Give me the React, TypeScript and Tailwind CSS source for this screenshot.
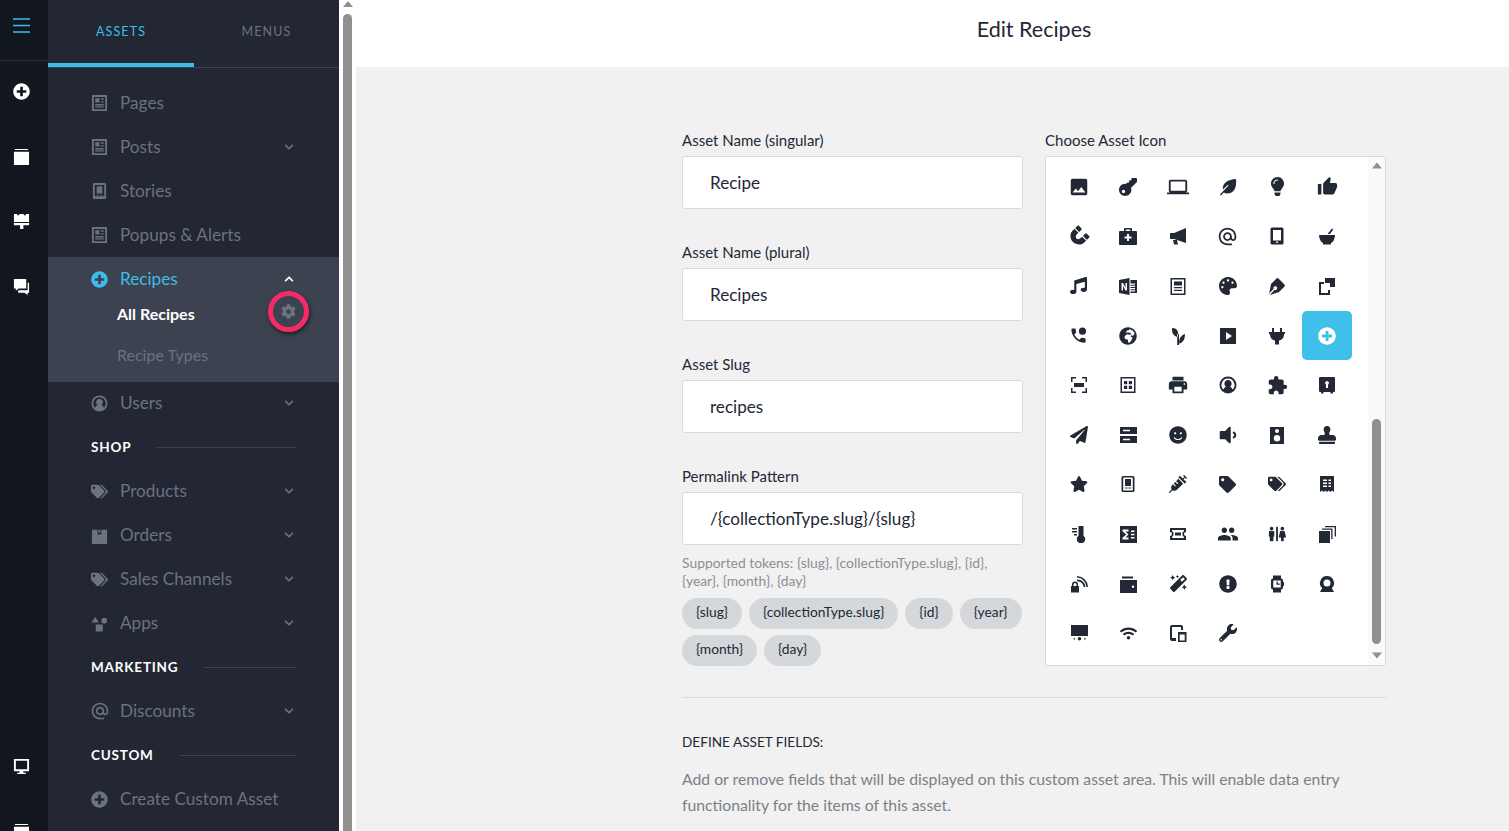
import type { ReactNode } from "react";
import {
  FaChevronDown,
  FaChevronUp,
  FaCog,
  FaExclamationCircle,
  FaGlobeAfrica,
  FaKey,
  FaLightbulb,
  FaMagic,
  FaMagnet,
  FaMusic,
  FaPalette,
  FaPaperPlane,
  FaPlusCircle,
  FaRestroom,
  FaSmile,
  FaStamp,
  FaStar,
  FaSyringe,
  FaTag,
  FaTags,
  FaVolumeDown,
  FaWifi,
  FaWrench,
} from "react-icons/fa";
import { MdAlternateEmail, MdExtension, MdImage, MdLaptop, MdPeople, MdPrint, MdThumbUp } from "react-icons/md";

type IconProps = { className?: string };

// Small helper for the hand drawn glyphs, all on an 18 unit box
const glyph = (d: string, extra?: ReactNode) =>
  function Glyph({ className = "h-[18px] w-[18px]" }: IconProps) {
    return (
      <svg viewBox="0 0 18 18" className={className} fill="currentColor">
        <path fillRule="evenodd" d={d} />
        {extra}
      </svg>
    );
  };

const Doc = glyph("M1 0h16v17H1V0zm2 2v13h12V2H3zm1.500 1.500h4.500V8H4.500V3.500zm6 0h3V5h-3V3.500zm0 3h3V8h-3V6.500zm-6 3h9V11h-9V9.500zm0 2.500h9v1.300h-9V12z");
const Phone = glyph("M3.500 0h11A1.500 1.500 0 0 1 16 1.500v14a1.500 1.500 0 0 1-1.500 1.500h-11A1.500 1.500 0 0 1 2 15.500v-14A1.500 1.500 0 0 1 3.500 0zM4 2v12h10V2H4zm2 1.500h6V11H6V3.500zM6 12.500h2.200v1H6zm3.800 0H12v1H9.800z");
const UserRing = glyph("M9 .5a8.500 8.500 0 1 1 0 17 8.500 8.500 0 0 1 0-17zm0 2a6.500 6.500 0 0 0-4.700 11c.8-1.700 2-2.500 2.700-2.800A3.600 3.600 0 1 1 11 10.700c.7.300 1.900 1.100 2.700 2.800A6.500 6.500 0 0 0 9 2.500z");
const OrderBox = glyph("M1 3h6v5h4V3h6v15H1V3zm7 0h2v3H8V3z");
const Shapes = glyph("M4.500 2l4 6h-8l4-6zM14 3a3 3 0 1 1 0 6 3 3 0 0 1 0-6zM5 10h7.500v7.500H5V10z");
const Expand = glyph("M1 1h5v1.500H2.500V6H1V1zm11 0h5v5h-1.500V2.500H12V1zM1 12h1.500v3.500H6V17H1v-5zm14.500 0H17v5h-5v-1.500h3.500V12zM4 7h10v4H4V7z");
const Panes = glyph("M1.500 1h15v16h-15V1zM3 2.500v13h12v-13H3zM5 5h3.200v3.200H5V5zm4.800 0H13v3.200H9.800V5zM5 9.800h3.200V13H5V9.800zm4.800 0H13V13H9.800V9.800z");
const Safe = glyph("M2 1h14a1 1 0 0 1 1 1v13a1 1 0 0 1-1 1h-1v1.500h-2.500V16h-7v1.500H3V16H2a1 1 0 0 1-1-1V2a1 1 0 0 1 1-1zm7 4a2 2 0 0 0-1 3.700V12h2V8.700A2 2 0 0 0 9 5z");
const ServerRows = glyph("M1 1h17v7H1V1zm3 2.800v1.400h7V3.800H4zM1 10h17v7H1v-7zm3 2.800v1.400h7v-1.400H4z");
const Speaker = glyph("M2 1h14v17H2V1zm7 2a2 2 0 1 0 0 4 2 2 0 0 0 0-4zm0 6a3.200 3.200 0 1 0 0 6.400A3.200 3.200 0 0 0 9 9z");
const Pda = glyph("M4 1h10a1.500 1.500 0 0 1 1.500 1.500v13A1.500 1.500 0 0 1 14 17H4a1.500 1.500 0 0 1-1.500-1.500v-13A1.500 1.500 0 0 1 4 1zm.200 1.500v13h9.600v-13H4.200zM6 4h6v7H6V4zm0 8.500h2.500v1H6zm3.500 0H12v1H9.500z");
const Sigma = glyph("M1 1h17v17H1V1zm2.500 3.500v1.800L7.200 9.500 3.500 12.700v1.800h6v-2H6.500l3-3-3-3h3v-2h-6zm8.500 1V7h3.500V5.500H12zm0 3.200v1.500h3.500V8.700H12zm0 3.200v1.500h3.500v-1.500H12z");
const LockWifi = glyph("M1 11h1v-1.500a3 3 0 0 1 6 0V11h1v6.500H1V11zm2.500 0h3V9.500a1.500 1.500 0 0 0-3 0V11zM7 4.500a8 8 0 0 1 8.500 7.500h-1.800A6.300 6.300 0 0 0 7 6.200V4.500zM7 1a11.500 11.500 0 0 1 11 11h-1.500A10 10 0 0 0 7 2.600V1z");
const Webcam = glyph("M9 1a7 7 0 0 1 4.800 12.100L16 17H2l2.200-3.900A7 7 0 0 1 9 1zm0 3.500a3.500 3.500 0 1 0 0 7 3.500 3.500 0 0 0 0-7z");
const Projector = glyph("M1 1h17v11H1V1zm8.500 12a1.800 1.800 0 1 1 0 3.600 1.800 1.800 0 0 1 0-3.600zM3.500 14.200h1.600v1.200H3.500zm10.500 0h1.600v1.200H14z");
const OneNote = glyph("M0 3l10.500-2v17L0 16V3zm2.500 3v7.500H4V8.800l2.500 4.700H8V6H6.500v4.700L4 6H2.500zM11.500 3H18v13h-6.500v-1.500H16v-1.200h-4.500v-1H16V11h-4.500v-1H16V8.700h-4.500v-1H16V6.400h-4.500V3z");
const FormTile = glyph("M1.500 1h15v17h-15V1zM3 2.500v14h12v-14H3zM5 4.500h8v4H5v-4zm0 5.500h8v1.300H5V10zm0 2.800h8V14H5v-1.200z");
const Brush = glyph("M1 1h3l1.500 2L7 1h4l1.500 2L14 1h3v8.500H1V1zM1 10.500h16V13h-6v4H7.500v-4H1v-2.500z");
const BoxStack = glyph("M2 1h14v1H2V1zM1 4h16v14H1V4z");
const Desktop = glyph("M1 1h16v13h-6v1.500h2.500V17h-9v-1.500H7V14H1V1zm2 2v9h12V3H3z");
const Bubbles = glyph("M1 1h13v10H6l-3 2.500V11H1V1zM15.500 5H17v10.500h-1.500V18l-3.500-2.500H5.500V13h10V5z");
const Leaf = glyph("M17 1c.8 7-1 14-8 14.500-1.800.1-3.200-.3-4.200-1L2 17.500 1 16.500l8.500-9-.7-.7L4 11.500C3 5 9 1.500 17 1z");
const Megaphone = glyph("M1 6h4l12-5v15L5 12H1V6zM4 13h4l1 4.500H5L4 13z");
const Tablet = glyph("M4 .5h10A1.500 1.500 0 0 1 15.500 2v14a1.500 1.500 0 0 1-1.500 1.500H4A1.500 1.500 0 0 1 2.500 16V2A1.500 1.500 0 0 1 4 .5zM5 3v10.500h8V3H5zm4 11.300a.9.900 0 1 0 0 1.800.9.900 0 0 0 0-1.800z");
const Mortar = glyph("M1 8h16c0 4-2 7-4 8v1.500H5V16C3 15 1 12 1 8zM9.500 7L14 1.500l1.300 1L12 7H9.500z");
const Nib = glyph("M1 17.500L3 7l6-6 1.500.5 6 6L17 9l-6 6-9.300 3 5-5.200a1.800 1.800 0 1 0-1-1L.7 17z");
const Share = glyph("M1 5h5v2H3v9h7v-3h2v5H1V5zM7 1h10v9h-5V6H7V1z");
const Slides = glyph("M1 1h16v16H1V1zm6 4v8l6-4-6-4z");
const Plug = glyph("M4 1h2v4h6V1h2v4h3v2h-1c0 4-2 6-5 6.500V17.500H7v-4C4 13 2 11 2 7H1V5h3V1z");
const Seedling = glyph("M8.200 7H10v11H8.200V7zM3 1c5 0 7 3 5.800 9C5 9.500 2.500 6 3 1zM16 7c0 6-2.500 9-6 9.500 0-5 2-8.500 6-9.500z");
const Receipt = glyph("M2 1h14v16l-2-1.500-1.700 1.500-1.600-1.500L9 17l-1.700-1.500L5.700 17 4 15.500 2 17V1zm3 3.500V6h4V4.500H5zm5.500 0V6H13V4.500h-2.500zM5 7.500V9h4V7.500H5zm5.500 0V9H13V7.500h-2.500zM5 10.500V12h4v-1.500H5zm5.500 0V12H13v-1.500h-2.500z");
const Thermo = glyph("M8.500 1h5v9.800a4.200 4.200 0 1 1-5 0V1zM2 3h5v1.500H2V3zM2 6h5v1.500H2V6zM4 9h3v1.500H4V9z");
const Ticket = glyph("M1 3h16v4a2 2 0 0 0 0 4v4H1v-4a2 2 0 0 0 0-4V3zm2 2v1a3.500 3.500 0 0 1 0 6v1h12v-1a3.500 3.500 0 0 1 0-6V5H3zm3 2.500h6v3H6v-3z");
const Stacked = glyph("M1 6h11v12H1V6zM4 3.500h10.500V14h-1.300V4.800H4V3.500zM7 1h11v10.500h-1.300V2.300H7V1z");
const Wallet = glyph("M3 1.500h11v2H3v-2zM1 5h17v13H1V5zm13 5.500a1.200 1.200 0 1 0 0 2.400 1.200 1.200 0 0 0 0-2.400z");
const Watch = glyph("M5 .5h8v3a2 2 0 0 1 2 2V7h1v4h-1v1.500a2 2 0 0 1-2 2v3H5v-3a2 2 0 0 1-2-2v-7a2 2 0 0 1 2-2v-3zM5.300 5.500v7h7.400v-7H5.300zM8.500 6.500h1.300v2h2v1.300H8.500V6.500z");
const Device = glyph("M3 1h9a2 2 0 0 1 2 2v3h-2V3H3v11h4v3H3a2 2 0 0 1-2-2V3a2 2 0 0 1 2-2zM9 8h8.500v10H9V8zm1.700 2.500v6h5v-6h-5z");
const Call = ({ className = "h-[19px] w-[19px]" }: IconProps) => (
  <svg viewBox="0 0 24 24" className={className} fill="currentColor">
    <path d="M6.620 10.790c1.440 2.830 3.760 5.140 6.590 6.590l2.200-2.200c.27-.27.67-.36 1.020-.24 1.120.37 2.330.57 3.570.57.55 0 1 .45 1 1V20c0 .55-.45 1-1 1-9.390 0-17-7.610-17-17 0-.55.45-1 1-1h3.500c.55 0 1 .45 1 1 0 1.250.2 2.450.57 3.570.11.35.03.74-.25 1.020l-2.200 2.200z" />
    <circle cx="17" cy="6.500" r="4.500" />
  </svg>
);

const gridIcons: ReactNode[] = [
  <MdImage className="h-[22px] w-[22px]" />,
  <FaKey className="h-[18px] w-[18px] rotate-180" />,
  <MdLaptop className="h-[22px] w-[22px]" />,
  <Leaf />,
  <FaLightbulb className="h-[19px] w-[19px]" />,
  <MdThumbUp className="h-[21px] w-[21px]" />,
  <FaMagnet className="h-[17px] w-[17px] rotate-45" />,
  <svg viewBox="0 0 18 18" className="h-[18px] w-[18px]" fill="currentColor">
    <path fillRule="evenodd" d="M6 1h6a1 1 0 0 1 1 1v2h4a1 1 0 0 1 1 1v12a1 1 0 0 1-1 1H1a1 1 0 0 1-1-1V5a1 1 0 0 1 1-1h4V2a1 1 0 0 1 1-1zm.800 1.500V4h4.400V2.500H6.800zM8 7v2.500H5.500v2H8V14h2v-2.500h2.500v-2H10V7H8z" />
  </svg>,
  <Megaphone />,
  <MdAlternateEmail className="h-[21px] w-[21px]" />,
  <Tablet />,
  <Mortar />,
  <FaMusic className="h-[17px] w-[17px]" />,
  <OneNote />,
  <FormTile />,
  <FaPalette className="h-[18px] w-[18px]" />,
  <Nib />,
  <Share />,
  <Call />,
  <FaGlobeAfrica className="h-[18px] w-[18px]" />,
  <Seedling />,
  <Slides />,
  <Plug />,
  <FaPlusCircle className="h-[18px] w-[18px] text-white" />,
  <Expand />,
  <Panes />,
  <MdPrint className="h-[22px] w-[22px]" />,
  <UserRing />,
  <MdExtension className="h-[21px] w-[21px]" />,
  <Safe />,
  <FaPaperPlane className="h-[18px] w-[18px]" />,
  <ServerRows />,
  <FaSmile className="h-[18px] w-[18px]" />,
  <FaVolumeDown className="h-[22px] w-[22px]" />,
  <Speaker />,
  <FaStamp className="h-[18px] w-[18px]" />,
  <FaStar className="h-[18px] w-[18px]" />,
  <Pda />,
  <FaSyringe className="h-[18px] w-[18px]" />,
  <FaTag className="h-[17px] w-[17px]" />,
  <FaTags className="h-[18px] w-[18px]" />,
  <Receipt />,
  <Thermo />,
  <Sigma />,
  <Ticket />,
  <MdPeople className="h-[22px] w-[22px]" />,
  <FaRestroom className="h-[18px] w-[18px]" />,
  <Stacked />,
  <LockWifi />,
  <Wallet />,
  <FaMagic className="h-[17px] w-[17px]" />,
  <FaExclamationCircle className="h-[18px] w-[18px]" />,
  <Watch />,
  <Webcam />,
  <Projector />,
  <FaWifi className="h-[17px] w-[17px]" />,
  <Device />,
  <FaWrench className="h-[18px] w-[18px]" />,
];

const navIcon = "h-[17px] w-[17px]";
const railIcon = "h-[17px] w-[17px]";

function NavRow({ icon, label, chevron = true }: { icon: ReactNode; label: string; chevron?: boolean }) {
  return (
    <div className="flex h-11 items-center pl-[43px] pr-[45px] text-[#6b7280]">
      <span className="flex w-[29px] shrink-0 items-center">{icon}</span>
      <span className="flex-1 pb-[1px] text-[17.200px]">{label}</span>
      {chevron && <FaChevronDown className="h-[10px] w-[10px]" />}
    </div>
  );
}

function SectionHead({ label }: { label: string }) {
  return (
    <div className="flex h-11 items-center gap-[26px] px-[43px]">
      <span className="text-[13.500px] font-bold tracking-[0.06em] text-white">{label}</span>
      <span className="h-px flex-1 bg-[#3c4250]" />
    </div>
  );
}

function Field({ label, value }: { label: string; value: string }) {
  return (
    <div>
      <div className="mb-[5px] h-5 text-[15px] leading-[19px] text-[#222834]">{label}</div>
      <div className="flex h-[53px] items-center rounded-[3px] border border-[#d8dade] bg-white pl-[27px] text-[17.100px] text-[#222834]">
        {value}
      </div>
    </div>
  );
}

function Token({ label }: { label: string }) {
  return <span className="flex h-[31px] items-center rounded-full bg-[#d5d8db] px-[14px] pb-[2px] text-[13.800px] text-[#222834]">{label}</span>;
}

export default function App() {
  return (
    <div className="flex h-screen overflow-hidden bg-[#f1f1f1] font-['Lato','Open_Sans',sans-serif]">
      <aside className="flex w-12 shrink-0 flex-col bg-[#12161f] text-white">
        <div className="flex h-[61px] w-full shrink-0 items-start border-b border-[#2a2f3a] pl-[13px] pt-[18px]">
          <svg viewBox="0 0 17 15" className="h-[15px] w-[17px] stroke-[#3dbdea]" strokeWidth="1.500">
            <path d="M0 1h17M0 7.500h17M0 14h17" />
          </svg>
        </div>
        <div className="flex flex-col items-start gap-[48px] pl-[13px] pt-[22px]">
          <FaPlusCircle className={railIcon} />
          <BoxStack className={railIcon} />
          <Brush className={railIcon} />
          <Bubbles className={railIcon} />
        </div>
        <div className="mt-[463px] flex flex-col items-start gap-[48px] pl-[13px]">
          <Desktop className={railIcon} />
          <BoxStack className={railIcon} />
        </div>
      </aside>

      <nav className="relative w-[291px] shrink-0 bg-[#222733]">
        <div className="flex h-[68px] border-b border-[#3c4250] text-[12.500px] tracking-[0.09em]">
          <div className="flex w-[146px] items-center justify-center border-b-4 border-[#3dbdea] pt-[1px] text-[#3dbdea]">ASSETS</div>
          <div className="flex flex-1 items-center justify-center pb-[3px] text-[#6b7280]">MENUS</div>
        </div>
        <div className="pt-[13px]">
          <NavRow icon={<Doc className={navIcon} />} label="Pages" chevron={false} />
          <NavRow icon={<Doc className={navIcon} />} label="Posts" />
          <NavRow icon={<Phone className={navIcon} />} label="Stories" chevron={false} />
          <NavRow icon={<Doc className={navIcon} />} label="Popups & Alerts" chevron={false} />

          <div className="-mb-px bg-[#3c4250] pb-[14px]">
            <div className="flex h-11 items-center pl-[43px] pr-[45px] text-[#3dbdea]">
              <span className="flex w-[29px] shrink-0 items-center"><FaPlusCircle className={navIcon} /></span>
              <span className="flex-1 pb-[1px] text-[17.200px]">Recipes</span>
              <FaChevronUp className="h-[10px] w-[10px] text-white" />
            </div>
            <div className="flex h-[26px] items-center pl-[69px] text-[16px] font-bold text-white">All Recipes</div>
            <div className="mt-[15px] flex h-[26px] items-center pl-[69px] text-[16px] text-[#6b7280]">Recipe Types</div>
          </div>

          <NavRow icon={<UserRing className={navIcon} />} label="Users" />
          <SectionHead label="SHOP" />
          <NavRow icon={<FaTags className={navIcon} />} label="Products" />
          <NavRow icon={<OrderBox className={navIcon} />} label="Orders" />
          <NavRow icon={<FaTags className={navIcon} />} label="Sales Channels" />
          <NavRow icon={<Shapes className={navIcon} />} label="Apps" />
          <SectionHead label="MARKETING" />
          <NavRow icon={<MdAlternateEmail className="h-[20px] w-[20px] -translate-x-px" />} label="Discounts" />
          <SectionHead label="CUSTOM" />
          <NavRow icon={<FaPlusCircle className={navIcon} />} label="Create Custom Asset" chevron={false} />
        </div>

        <div className="absolute left-[220px] top-[291px] flex h-[41px] w-[41px] items-center justify-center rounded-full border-[5px] border-[#f72a68] shadow-[1px_2px_4px_rgba(0,0,0,0.6)]">
          <FaCog className="h-[15px] w-[15px] text-[#6b7280]" />
        </div>
      </nav>

      <div className="flex w-[17px] shrink-0 flex-col items-center bg-white">
        <svg viewBox="0 0 10 6" className="mt-px h-[6px] w-[10px] fill-[#909090]"><path d="M5 0l5 6H0z" /></svg>
        <div className="mt-[7px] w-[9px] flex-1 rounded-t-full bg-[#909090]" />
      </div>

      <main className="min-w-0 flex-1">
        <header className="h-[67px] bg-white">
          <div className="ml-[326px] flex h-full w-[704px] items-center justify-center pb-[8px] text-[21.500px] text-[#222834]">Edit Recipes</div>
        </header>
        <div className="ml-[326px] w-[704px] pt-[64px]">
          <div className="flex gap-[22px]">
            <div className="w-[341px]">
              <div className="flex flex-col gap-[34px]">
                <Field label="Asset Name (singular)" value="Recipe" />
                <Field label="Asset Name (plural)" value="Recipes" />
                <Field label="Asset Slug" value="recipes" />
                <Field label="Permalink Pattern" value="/{collectionType.slug}/{slug}" />
              </div>
              <p className="mt-[9px] text-[13.900px] leading-[18px] text-[#8a8f96]">
                Supported tokens: {"{slug}"}, {"{collectionType.slug}"}, {"{id}"}, {"{year}"}, {"{month}"}, {"{day}"}
              </p>
              <div className="mt-2 flex flex-wrap gap-x-[7px] gap-y-[6px]">
                <Token label="{slug}" />
                <Token label="{collectionType.slug}" />
                <Token label="{id}" />
                <Token label="{year}" />
                <Token label="{month}" />
                <Token label="{day}" />
              </div>
            </div>

            <div className="flex w-[341px] flex-col">
              <div className="mb-[5px] h-5 text-[15px] leading-[19px] text-[#222834]">Choose Asset Icon</div>
              <div className="flex h-[510px] justify-between rounded-[2px] border border-[#d8dade] bg-white pl-[8px]">
                <div className="grid w-[298px] grid-cols-6 auto-rows-[49.600px] content-start pt-[5px] text-[#222834]">
                  {gridIcons.map((icon, i) => (
                    <div key={i} className={`flex items-center justify-center ${i === 23 ? "rounded-[5px] bg-[#3fbfe9]" : ""}`}>
                      {icon}
                    </div>
                  ))}
                </div>
                <div className="flex w-[17px] flex-col items-center bg-[#fafafa]">
                  <svg viewBox="0 0 10 6" className="mt-[5px] h-[7px] w-[10px] fill-[#909090]"><path d="M5 0l5 6H0z" /></svg>
                  <div className="mt-[250px] h-[225px] w-[9px] rounded-full bg-[#909090]" />
                  <svg viewBox="0 0 10 6" className="mt-[8px] h-[7px] w-[10px] fill-[#909090]"><path d="M0 0h10L5 6z" /></svg>
                </div>
              </div>
            </div>
          </div>

          <div className="mt-[31px] h-px bg-[#dcdcdc]" />
          <div className="mt-[34px] text-[13.600px] leading-5 text-[#222834]">DEFINE ASSET FIELDS:</div>
          <p className="mt-[14px] text-[15.750px] leading-[26px] text-[#7b8087]">
            Add or remove fields that will be displayed on this custom asset area. This will enable data entry functionality for the items of this asset.
          </p>
        </div>
      </main>
    </div>
  );
}
